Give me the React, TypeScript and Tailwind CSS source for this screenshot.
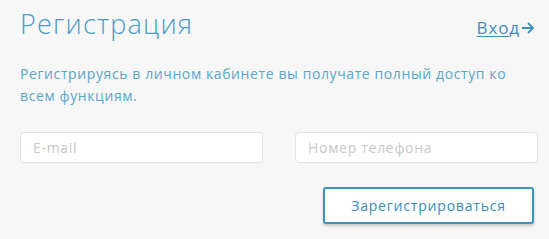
import React from 'react';

const font = { fontFamily: '"Open Sans", "Noto Sans", sans-serif' };

const App: React.FC = () => {
  return (
    <div className="w-[549px] h-[239px] bg-[#f7f7f7] overflow-hidden" style={font}>
      <div className="pl-[20px] pr-[10px] pt-[5px]">
        <div className="flex items-start justify-between">
          <h1 className="text-[27px] font-light leading-[37px] text-[#4a9cc6] tracking-[1.2px]">Регистрация</h1>
          <a
            href="#"
            className="mt-[12px] mr-[4px] flex items-center text-[17px] leading-[22px] tracking-[0.9px] text-[#3d8fbb]"
          >
            <span className="underline underline-offset-[2px] decoration-1">Вход</span>
            <svg width="14" height="14" viewBox="0 0 14 14" className="ml-[1px]" fill="none" stroke="#3d8fbb" strokeWidth="1.8">
              <path d="M1 7h11M7 2l5 5-5 5" />
            </svg>
          </a>
        </div>
        <p className="mt-[21px] w-[505px] text-[14px] leading-[22px] tracking-[0.6px] text-[#5aa6c9]">
          Регистрируясь в личном кабинете вы получате полный доступ ко всем функциям.
        </p>
        <div className="mt-[25px] flex gap-[32px]">
          <input
            placeholder="E-mail"
            className="w-[243px] h-[31px] rounded-[4px] border border-[#e2e2e2] bg-white px-[12px] text-[14px] tracking-[0.7px] placeholder:text-[#c8c8c8] outline-none"
          />
          <input
            placeholder="Номер телефона"
            className="w-[243px] h-[31px] rounded-[4px] border border-[#e2e2e2] bg-white px-[12px] text-[14px] tracking-[0.7px] placeholder:text-[#c8c8c8] outline-none"
          />
        </div>
        <div className="mt-[24px] flex justify-end pr-[5px]">
          <button className="w-[211px] h-[37px] rounded-[3px] border-2 border-[#3a94bc] bg-white text-[14px] font-medium tracking-[0.8px] text-[#3a8cb8] shadow-[0_2px_3px_rgba(0,0,0,0.2)]">
            Зарегистрироваться
          </button>
        </div>
      </div>
    </div>
  );
};

export default App;
